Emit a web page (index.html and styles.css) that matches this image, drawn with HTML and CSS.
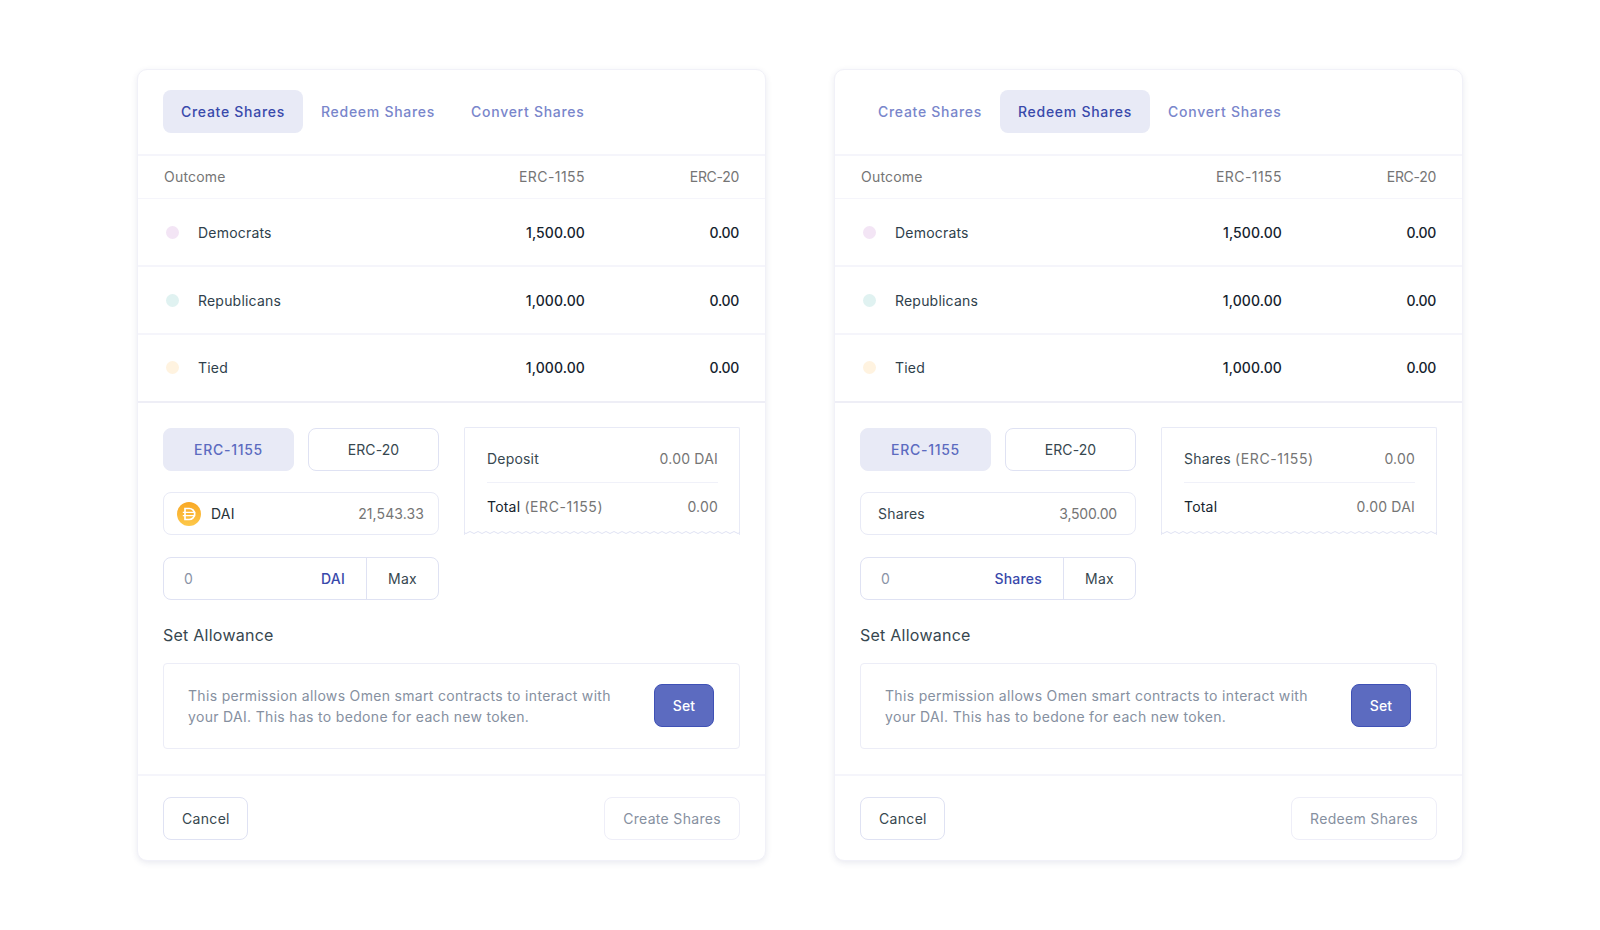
FILE: index.html
```html
<!DOCTYPE html>
<html lang="en">
<head>
<meta charset="utf-8">
<title>Omen shares</title>
<link rel="stylesheet" href="styles.css">
</head>
<body>
<main class="page">
  <section class="card">
    <nav class="tabs">
      <span class="tab active">Create Shares</span>
      <span class="tab">Redeem Shares</span>
      <span class="tab">Convert Shares</span>
    </nav>
    <div class="row head"><span class="c-name">Outcome</span><span class="c-a">ERC-1155</span><span class="c-b">ERC-20</span></div>
    <div class="row"><span class="c-name"><i class="dot pink"></i>Democrats</span><b class="c-a">1,500.00</b><b class="c-b">0.00</b></div>
    <div class="row"><span class="c-name"><i class="dot teal"></i>Republicans</span><b class="c-a">1,000.00</b><b class="c-b">0.00</b></div>
    <div class="row last"><span class="c-name"><i class="dot cream"></i>Tied</span><b class="c-a">1,000.00</b><b class="c-b">0.00</b></div>
    <div class="body">
      <div class="columns">
        <div class="left">
          <div class="toggle"><span class="tbtn on">ERC-1155</span><span class="tbtn">ERC-20</span></div>
          <div class="balance">
            <span class="token">
              <svg class="coin" viewBox="0 0 24 24" aria-hidden="true"><defs><linearGradient id="g1" x1="0" y1="0" x2="0" y2="1"><stop offset="0" stop-color="#f9a825"/><stop offset="1" stop-color="#fdc84a"/></linearGradient></defs><circle cx="12" cy="12" r="12" fill="url(#g1)"/><path d="M8 6.5h4.2a5.5 5.5 0 0 1 0 11H8z" fill="none" stroke="#fff" stroke-width="1.7"/><path d="M5.8 10.4h12.4M5.8 13.6h12.4" stroke="#fff" stroke-width="1.4"/></svg>
              DAI
            </span>
            <span class="muted figure">21,543.33</span>
          </div>
          <div class="amount"><span class="placeholder">0</span><span class="unit">DAI</span><span class="max">Max</span></div>
        </div>
        <div class="receipt">
          <div class="line"><span class="slate">Deposit</span><span class="muted">0.00 DAI</span></div>
          <div class="line"><span class="ink">Total <span class="muted wide">(ERC-1155)</span></span><span class="muted">0.00</span></div>
          <svg class="wave" aria-hidden="true"><defs><pattern id="w1" width="8" height="4" patternUnits="userSpaceOnUse"><path d="M0 1.5Q2 3.5 4 1.5T8 1.5" fill="none" stroke="#dfe2f3"/></pattern></defs><rect width="100%" height="4" fill="url(#w1)"/></svg>
        </div>
      </div>
      <h2 class="title">Set Allowance</h2>
      <div class="allow">
        <p>This permission allows Omen smart contracts to interact with your DAI. This has to bedone for each new token.</p>
        <span class="set">Set</span>
      </div>
    </div>
    <footer class="foot"><span class="btn">Cancel</span><span class="btn off">Create Shares</span></footer>
  </section>

  <section class="card">
    <nav class="tabs">
      <span class="tab">Create Shares</span>
      <span class="tab active">Redeem Shares</span>
      <span class="tab">Convert Shares</span>
    </nav>
    <div class="row head"><span class="c-name">Outcome</span><span class="c-a">ERC-1155</span><span class="c-b">ERC-20</span></div>
    <div class="row"><span class="c-name"><i class="dot pink"></i>Democrats</span><b class="c-a">1,500.00</b><b class="c-b">0.00</b></div>
    <div class="row"><span class="c-name"><i class="dot teal"></i>Republicans</span><b class="c-a">1,000.00</b><b class="c-b">0.00</b></div>
    <div class="row last"><span class="c-name"><i class="dot cream"></i>Tied</span><b class="c-a">1,000.00</b><b class="c-b">0.00</b></div>
    <div class="body">
      <div class="columns">
        <div class="left">
          <div class="toggle"><span class="tbtn on">ERC-1155</span><span class="tbtn">ERC-20</span></div>
          <div class="balance shares"><span class="token">Shares</span><span class="muted figure">3,500.00</span></div>
          <div class="amount"><span class="placeholder">0</span><span class="unit">Shares</span><span class="max">Max</span></div>
        </div>
        <div class="receipt">
          <div class="line"><span class="slate">Shares <span class="muted wide">(ERC-1155)</span></span><span class="muted">0.00</span></div>
          <div class="line"><span class="ink">Total</span><span class="muted">0.00 DAI</span></div>
          <svg class="wave" aria-hidden="true"><defs><pattern id="w2" width="8" height="4" patternUnits="userSpaceOnUse"><path d="M0 1.5Q2 3.5 4 1.5T8 1.5" fill="none" stroke="#dfe2f3"/></pattern></defs><rect width="100%" height="4" fill="url(#w2)"/></svg>
        </div>
      </div>
      <h2 class="title">Set Allowance</h2>
      <div class="allow">
        <p>This permission allows Omen smart contracts to interact with your DAI. This has to bedone for each new token.</p>
        <span class="set">Set</span>
      </div>
    </div>
    <footer class="foot"><span class="btn">Cancel</span><span class="btn off">Redeem Shares</span></footer>
  </section>
</main>
</body>
</html>
```
FILE: styles.css
```css
* { box-sizing: border-box; }
html, body { margin: 0; height: 100%; background: #fff; }
body {
  font-family: Inter, Roboto, "Liberation Sans", sans-serif;
  font-size: 14px;
  letter-spacing: 0.2px;
  color: #37474f;
}
.page {
  display: flex;
  gap: 68px;
  padding: 69px 0 0 137px;
  align-items: flex-start;
}
.card {
  width: 629px;
  height: 792px;
  display: flex;
  flex-direction: column;
  background: #fff;
  border: 1px solid #f1f1f8;
  border-radius: 10px;
  box-shadow: 0 2px 6px rgba(40, 50, 110, 0.1);
}
.tabs {
  height: 86px;
  flex: none;
  display: flex;
  align-items: center;
  padding: 0 25px 2px;
  border-bottom: 2px solid #f5f5fb;
}
.tab {
  height: 43px;
  display: flex;
  align-items: center;
  padding: 0 18px;
  border-radius: 8px;
  color: #7986cb;
  font-weight: 500;
  letter-spacing: 0.72px;
}
.tab.active { background: #e8eaf6; color: #3949ab; }
.row {
  height: 68px;
  flex: none;
  display: flex;
  align-items: center;
  padding: 0 26px;
  border-bottom: 2px solid #f5f5fb;
}
.row.head {
  height: 43px;
  padding-bottom: 1px;
  border-bottom-width: 1px;
  color: #757575;
}
.row.last { padding-bottom: 1px; border-bottom-color: #eeeef6; }
.c-name { flex: 1; display: flex; align-items: center; color: #2f3f4c; }
.row.head .c-name { color: #757575; }
.c-a { width: 130px; text-align: right; }
.c-b { width: 154px; text-align: right; letter-spacing: -0.3px; }
.head .c-a { letter-spacing: 0.45px; }
.row b { font-weight: 500; color: #15232e; }
.row b.c-a { letter-spacing: 0.1px; }
.dot {
  width: 13px;
  height: 13px;
  margin: 0 19px 0 2px;
  border-radius: 50%;
}
.pink { background: #f3e5f5; }
.teal { background: #e0f2f1; }
.cream { background: #fff3e0; }
.body {
  flex: 1;
  padding: 25px 25px 0 25px;
}
.columns { display: flex; gap: 25px; align-items: flex-start; height: 198px; }
.left { width: 276px; display: flex; flex-direction: column; gap: 21px; }
.toggle { display: flex; gap: 14px; }
.tbtn {
  flex: 1;
  height: 43px;
  display: flex;
  align-items: center;
  justify-content: center;
  border: 1px solid #dfe2f3;
  border-radius: 8px;
  letter-spacing: 0.1px;
}
.tbtn.on { background: #e8eaf6; border-color: #e8eaf6; color: #5c6bc0; font-weight: 500; letter-spacing: 0.7px; }
.balance {
  height: 43px;
  display: flex;
  align-items: center;
  justify-content: space-between;
  padding: 0 14px 0 13px;
  border: 1px solid #e8eaf6;
  border-radius: 8px;
}
.balance.shares { padding: 0 18px 0 17px; }
.token { display: flex; align-items: center; gap: 10px; color: #263238; }
.shares .token { color: #37474f; }
.figure { letter-spacing: 0.1px; }
.shares .figure { letter-spacing: -0.2px; }
.coin { width: 24px; height: 24px; }
.muted { color: #757575; }
.wide { letter-spacing: 0.6px; }
.slate { color: #37474f; }
.ink { color: #15232e; }
.amount {
  height: 43px;
  margin-top: 1px;
  display: flex;
  align-items: center;
  border: 1px solid #dfe2f3;
  border-radius: 8px;
}
.placeholder { flex: 1; padding-left: 20px; color: #8a93a6; }
.unit { padding-right: 21px; color: #3949ab; font-weight: 500; }
.max {
  width: 72px;
  height: 100%;
  display: flex;
  align-items: center;
  justify-content: center;
  border-left: 1px solid #dfe2f3;
}
.receipt {
  position: relative;
  width: 276px;
  height: 108px;
  margin-top: -1px;
  padding: 7px 21px 0 22px;
  border: 1px solid #e8eaf6;
  border-bottom: 0;
  border-radius: 2px 2px 0 0;
}
.line {
  height: 47px;
  display: flex;
  align-items: center;
  justify-content: space-between;
}
.line + .line { border-top: 1px solid #f0f1f9; height: 49px; padding-bottom: 2px; }
.wave {
  position: absolute;
  left: -1px;
  right: -1px;
  bottom: 0;
  width: calc(100% + 2px);
  height: 4px;
}
.title {
  margin: 0;
  height: 37px;
  font-size: 16px;
  font-weight: 400;
  line-height: 19px;
  letter-spacing: 0.25px;
  color: #37474f;
}
.allow {
  height: 86px;
  display: flex;
  align-items: center;
  justify-content: space-between;
  padding: 0 25px 0 24px;
  border: 1px solid #ecedf7;
  border-radius: 4px;
}
.allow p {
  margin: 0;
  width: 445px;
  line-height: 21.5px;
  letter-spacing: 0.32px;
  color: #86909f;
}
.set {
  width: 60px;
  height: 43px;
  margin-top: -1px;
  display: flex;
  align-items: center;
  justify-content: center;
  border: 1px solid #3f51b5;
  border-radius: 8px;
  background: #5c6bc0;
  color: #fff;
  font-weight: 500;
}
.foot {
  height: 86px;
  flex: none;
  display: flex;
  align-items: center;
  justify-content: space-between;
  padding: 0 25px 0 25px;
  border-top: 2px solid #f5f5fb;
}
.btn {
  height: 43px;
  display: flex;
  align-items: center;
  padding: 0 17px 0 18px;
  border: 1px solid #dfe2f3;
  border-radius: 8px;
  color: #37474f;
  letter-spacing: 0.32px;
}
.btn.off { padding: 0 18px; border-color: #eeeef8; color: #86909f; }
```
